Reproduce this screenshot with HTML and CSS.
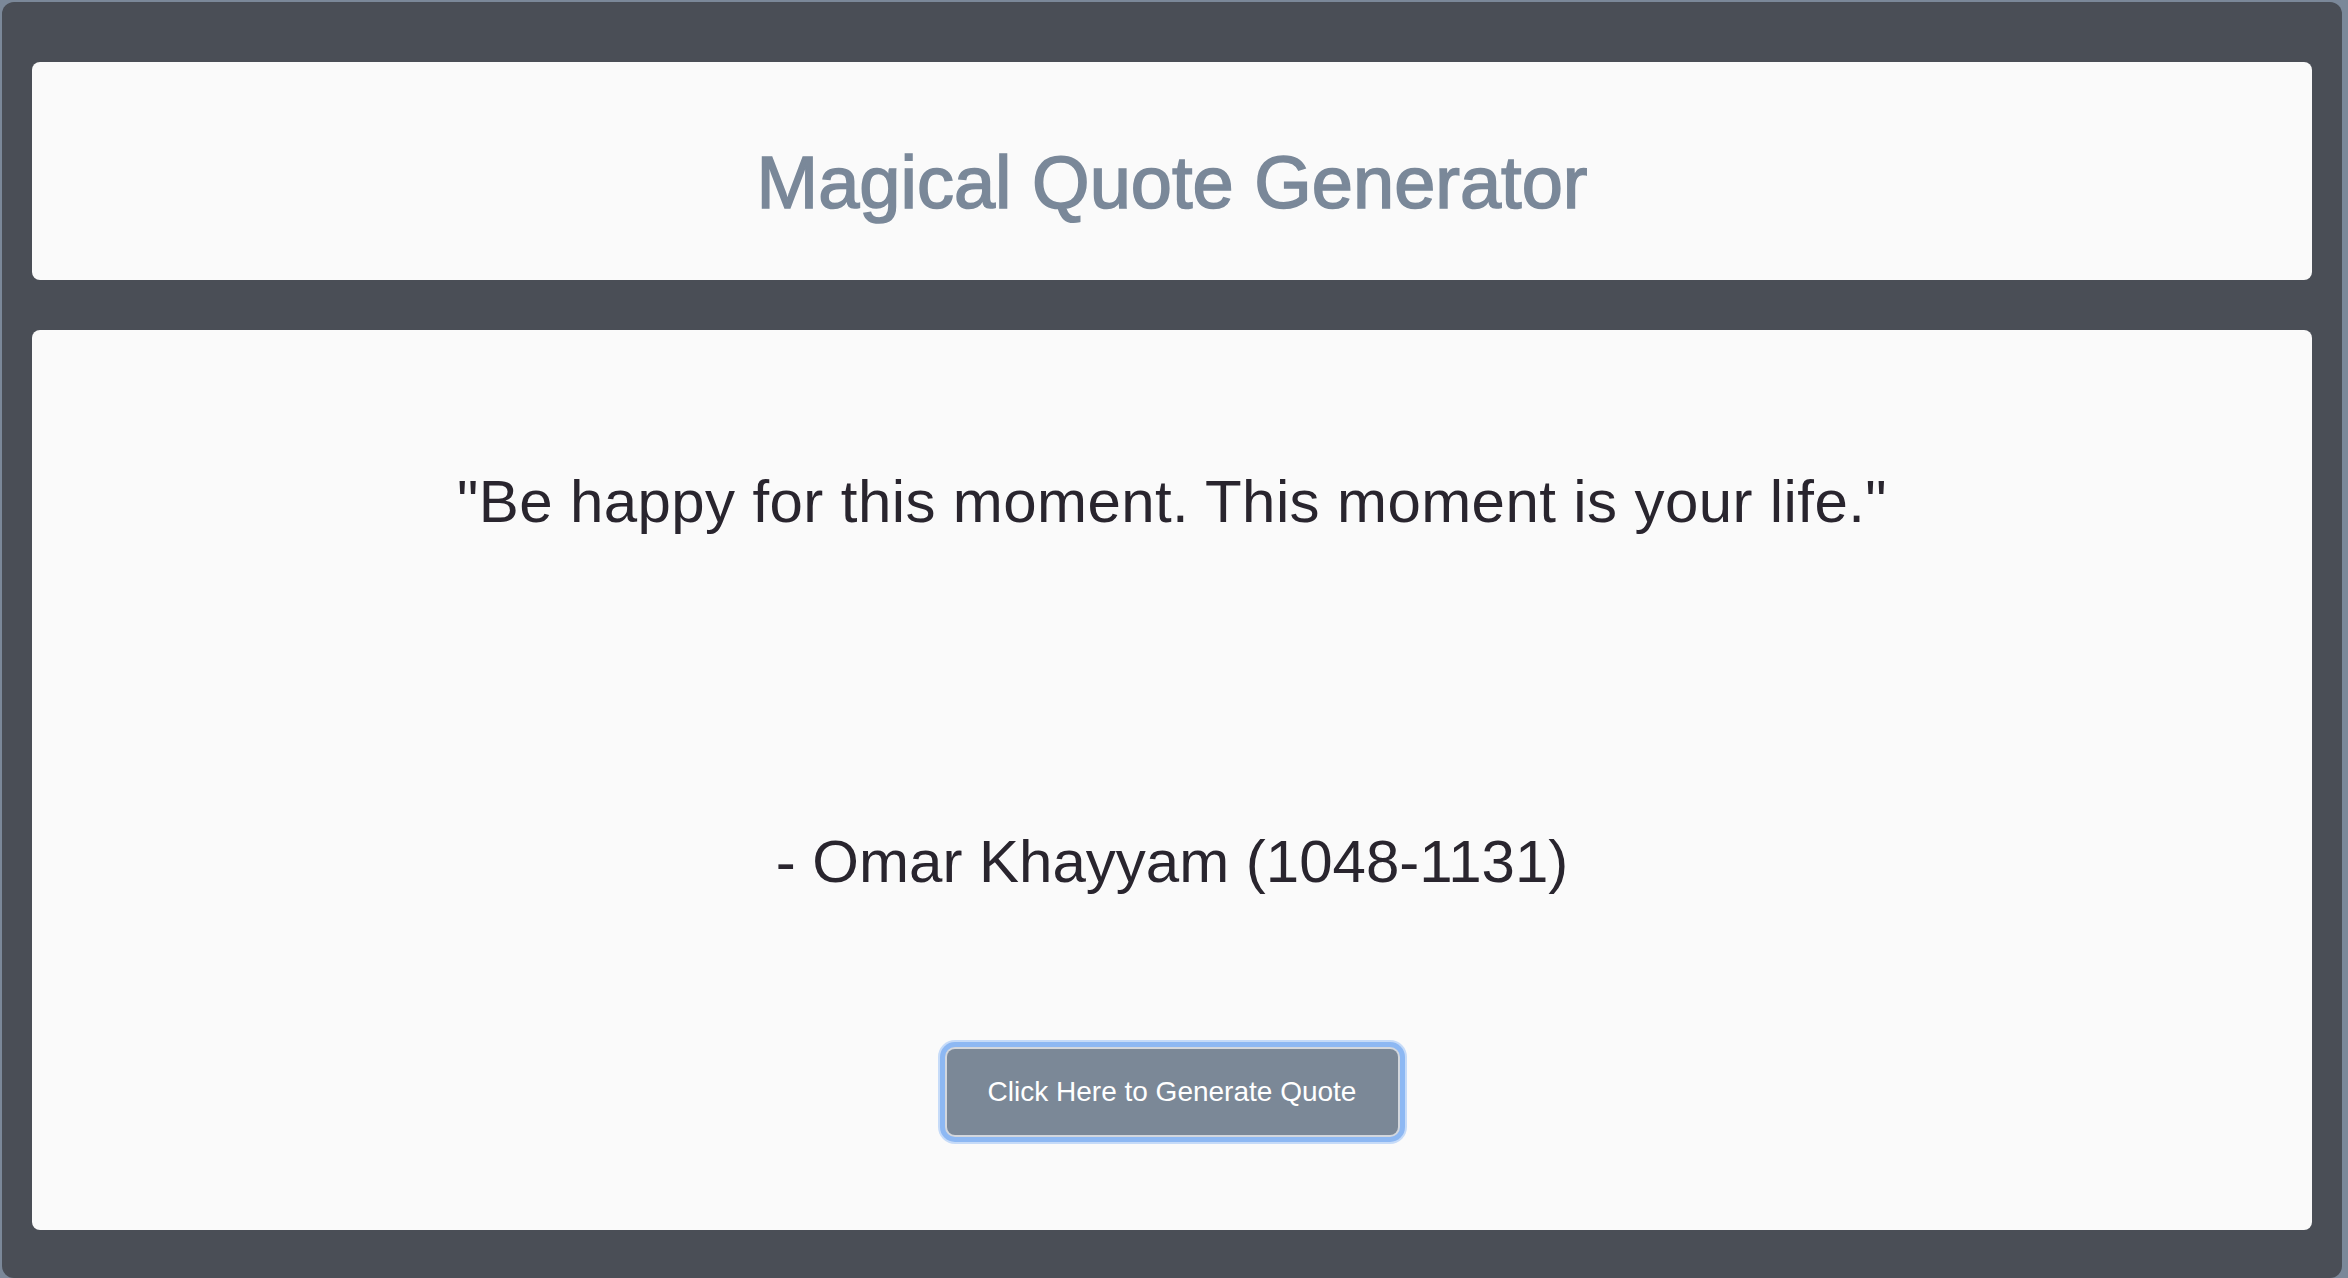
FILE: index.html
```html
<!DOCTYPE html>
<html lang="en">
<head>
<meta charset="utf-8">
<title>Magical Quote Generator</title>
<link rel="stylesheet" href="styles.css">
</head>
<body>
<div class="frame">
  <header class="card header-card">
    <h1 class="title">Magical Quote Generator</h1>
  </header>
  <main class="card quote-card">
    <p class="quote">"Be happy for this moment. This moment is your life."</p>
    <p class="author">- Omar Khayyam (1048-1131)</p>
    <button class="generate" type="button">Click Here to Generate Quote</button>
  </main>
</div>
</body>
</html>
```

FILE: styles.css
```css
html, body {
  margin: 0;
  padding: 0;
  height: 100%;
  overflow: hidden;
}

body {
  background: #7b8899;
  font-family: "Liberation Sans", Arial, Helvetica, sans-serif;
}

.frame {
  margin: 2px 6px 0 2px;
  height: 1276px;
  box-sizing: border-box;
  padding: 60px 30px 0 30px;
  background: #4a4e56;
  border-radius: 12px;
  display: flex;
  flex-direction: column;
  gap: 50px;
}

.card {
  background: #fafafa;
  border-radius: 8px;
  box-sizing: border-box;
}

.header-card {
  height: 218px;
  padding-top: 78px;
  text-align: center;
}

.title {
  margin: 0;
  font-size: 74px;
  line-height: 85px;
  font-weight: 400;
  color: #7a8899;
  -webkit-text-stroke: 1.6px #7a8899;
}

.quote-card {
  height: 900px;
  padding-top: 137px;
  display: flex;
  flex-direction: column;
  align-items: center;
}

.quote,
.author {
  margin: 0;
  font-size: 60px;
  line-height: 69px;
  color: #29252e;
  text-align: center;
}

.quote {
  letter-spacing: 0.4px;
}

.author {
  margin-top: 291px;
}

.generate {
  margin-top: 153px;
  width: 451px;
  height: 86px;
  border: none;
  border-radius: 8px;
  background: #7b8897;
  color: #ffffff;
  font-family: "Liberation Sans", Arial, Helvetica, sans-serif;
  font-size: 28px;
  padding: 0;
  box-shadow: 0 0 0 2px #d3d7dd, 0 0 0 7px #8db8f3, 0 0 0 9px #c6dbf8;
  cursor: pointer;
}
```
